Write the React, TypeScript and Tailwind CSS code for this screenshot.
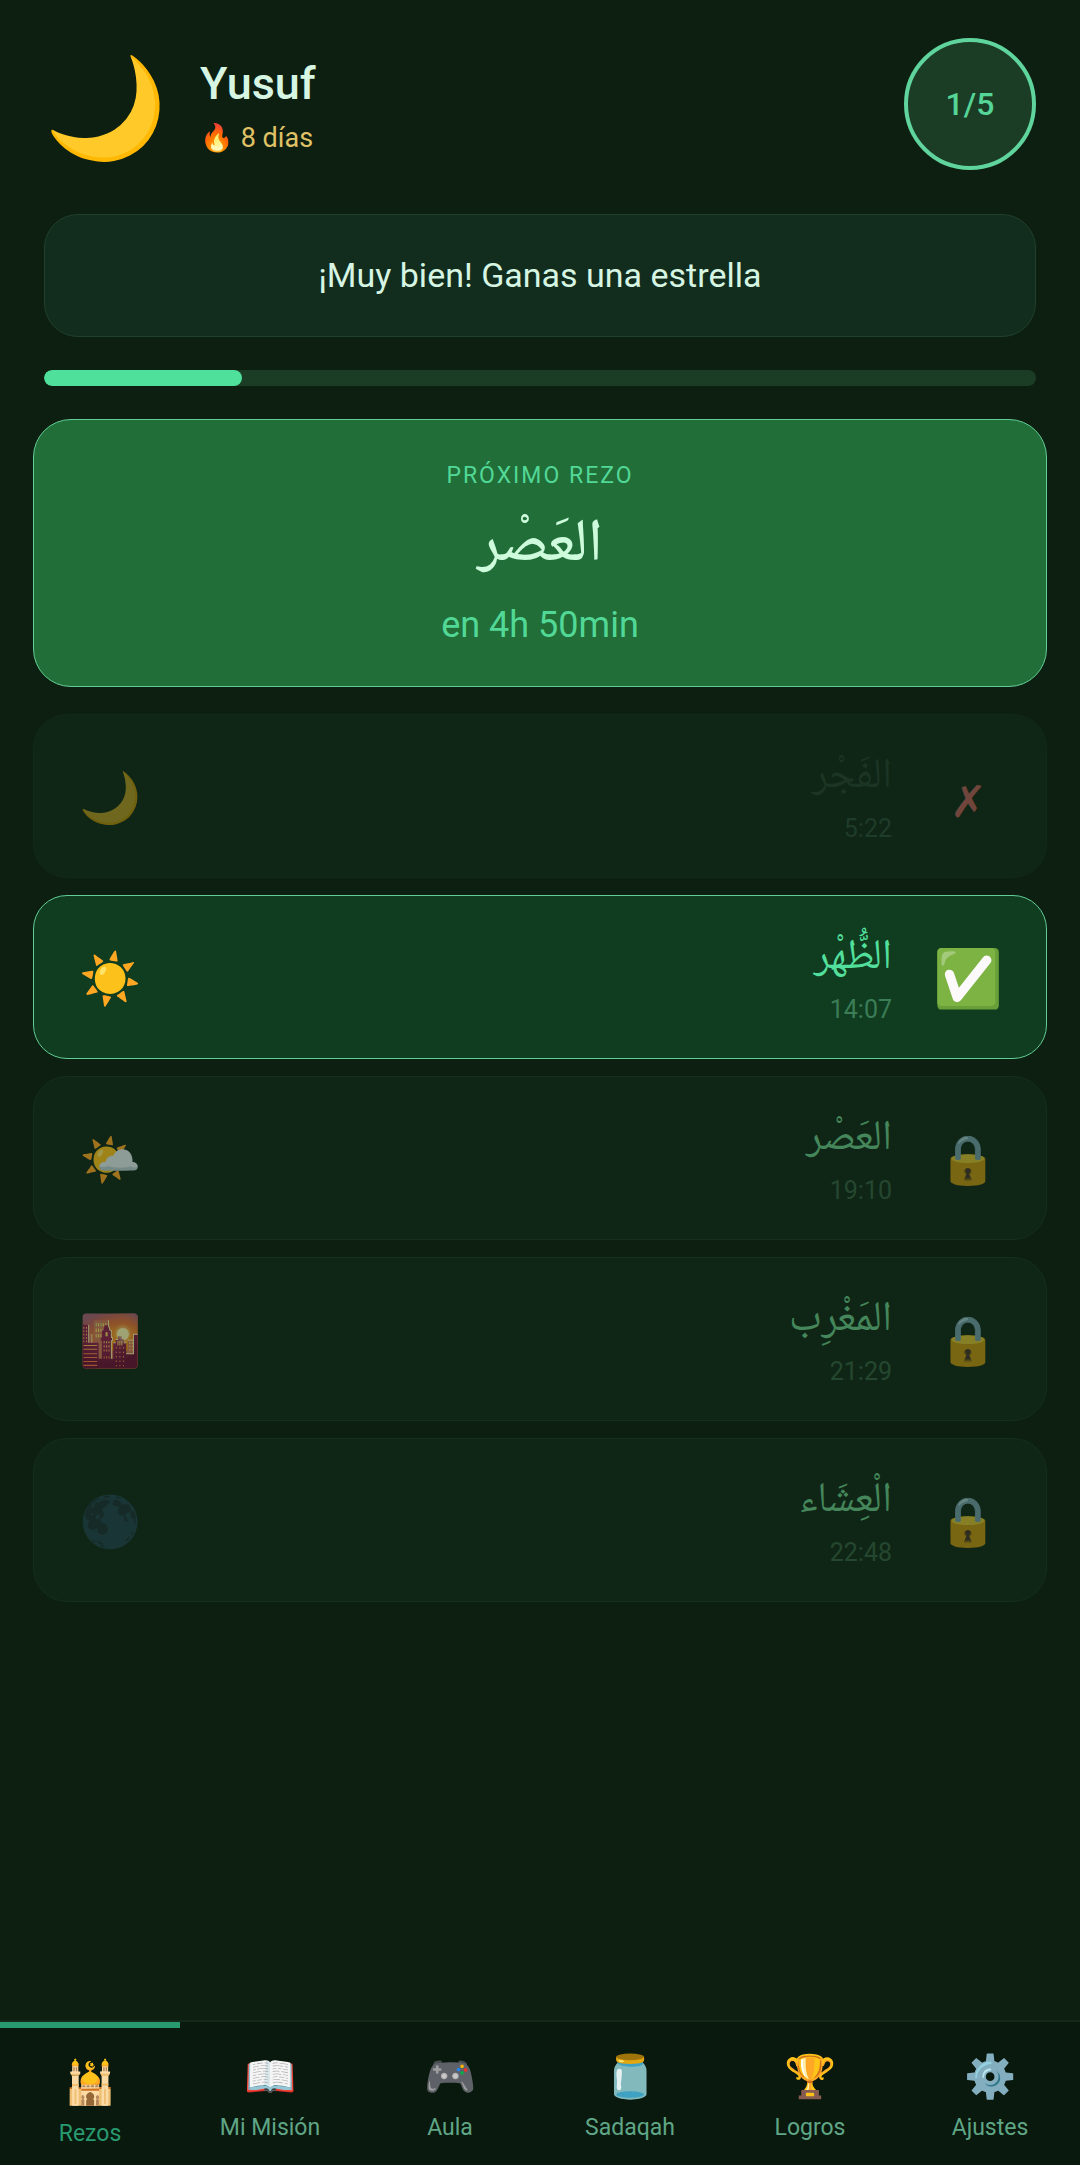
import clsx from "clsx";

type PrayerState = "missed" | "done" | "locked";

type Prayer = { name: string; time: string; icon: string; state: PrayerState };

const prayers: Prayer[] = [
  { name: "الفَجْر", time: "5:22", icon: "🌙", state: "missed" },
  { name: "الظُّهْر", time: "14:07", icon: "☀️", state: "done" },
  { name: "العَصْر", time: "19:10", icon: "🌤️", state: "locked" },
  { name: "المَغْرِب", time: "21:29", icon: "🌇", state: "locked" },
  { name: "الْعِشَاء", time: "22:48", icon: "🌑", state: "locked" },
];

const tabs = [
  { label: "Rezos", icon: "🕌", active: true },
  { label: "Mi Misión", icon: "📖" },
  { label: "Aula", icon: "🎮" },
  { label: "Sadaqah", icon: "🫙" },
  { label: "Logros", icon: "🏆" },
  { label: "Ajustes", icon: "⚙️" },
];

const rowStyle: Record<PrayerState, string> = {
  missed: "border-[#122819] bg-[#0f2516]",
  done: "border-[#62cd96] bg-[#103c20]",
  locked: "border-[#152e1e] bg-[#0f2616]",
};

const nameStyle: Record<PrayerState, string> = {
  missed: "text-[#1c3424]",
  done: "text-[#52de9b]",
  locked: "text-[#45865b]",
};

const timeStyle: Record<PrayerState, string> = {
  missed: "text-[#1f3b2a]",
  done: "text-[#3a7d56]",
  locked: "text-[#25472f]",
};

const iconStyle: Record<PrayerState, string> = {
  missed: "opacity-40",
  done: "",
  locked: "opacity-60",
};

function Status({ state }: { state: PrayerState }) {
  if (state === "done") return <span className="text-[56px]">✅</span>;
  if (state === "missed") return <span className="pt-2 text-[44px] text-[#70453c]">✗</span>;
  return <span className="text-[48px] opacity-50">🔒</span>;
}

function PrayerRow({ prayer }: { prayer: Prayer }) {
  const { name, time, icon, state } = prayer;
  return (
    <li>
      <button
        className={clsx(
          "flex h-41 w-full items-center rounded-[34px] border pr-[34px] pl-8 leading-none",
          rowStyle[state],
        )}
      >
        <span className={clsx("w-22 pt-1 text-center text-[50px]", iconStyle[state])}>{icon}</span>
        <span className="flex flex-1 flex-col items-end pr-8">
          <span
            dir="rtl"
            className={clsx("font-['Noto_Naskh_Arabic',serif] text-[42px] leading-[66px]", nameStyle[state])}
          >
            {name}
          </span>
          <span className={clsx("text-[25px] leading-[36px]", timeStyle[state])}>{time}</span>
        </span>
        <span className="flex w-22 justify-center pt-1">
          <Status state={state} />
        </span>
      </button>
    </li>
  );
}

export default function App() {
  const done = prayers.filter((p) => p.state === "done").length;
  return (
    <div className="flex min-h-screen flex-col bg-[#0d1f11] font-['Roboto',sans-serif] text-[#d6f5e3]">
      <header className="flex items-center px-11 pt-[38px]">
        <span className="pt-2 text-[99px] leading-none">🌙</span>
        <div className="ml-[33px] flex-1 pt-2">
          <h1 className="text-[45px] leading-[60px] font-medium">Yusuf</h1>
          <p className="text-[27px] leading-[48px] text-[#e0c266]">🔥 8 días</p>
        </div>
        <div className="flex size-33 items-center justify-center rounded-full border-4 border-[#5fd49c] bg-[#1b3c25] text-[32px] font-medium text-[#55d597]">
          {done}/{prayers.length}
        </div>
      </header>

      <p className="mx-11 mt-11 rounded-[34px] border border-[#20402e] bg-[#122d1d] pt-9 pb-[37px] text-center text-[34px] leading-[48px]">
        ¡Muy bien! Ganas una estrella
      </p>

      <div className="mx-11 mt-[33px] h-4 overflow-hidden rounded-lg bg-[#1b3c25]">
        <div className="h-full rounded-lg bg-[#4fe09b]" style={{ width: `${(done / prayers.length) * 100}%` }} />
      </div>

      <main className="flex-1 px-[33px]">
        <section className="mt-[33px] rounded-[38px] border border-[#62cd96] bg-[#216e39] pt-[34px] pb-8 text-center text-[#52d896]">
          <h2 className="text-[23px] leading-[44px] tracking-[2px] uppercase">Próximo rezo</h2>
          <p
            dir="rtl"
            className="font-['Noto_Naskh_Arabic',serif] text-[60px] leading-[98px] font-medium text-[#cdfbdc]"
          >
            العَصْر
          </p>
          <p className="text-[36px] leading-[58px]">en 4h 50min</p>
        </section>

        <ul className="mt-[27px] space-y-[17px]">
          {prayers.map((p) => (
            <PrayerRow key={p.time} prayer={p} />
          ))}
        </ul>
      </main>

      <nav className="flex border-t-2 border-[#15291a] bg-[#0a190d]">
        {tabs.map((tab) => (
          <button
            key={tab.label}
            className={clsx(
              "flex h-[143px] flex-1 flex-col items-center pt-6 text-[23px]",
              tab.active ? "border-t-6 border-[#279a70] text-[#279a70]" : "text-[#5fa687]",
            )}
          >
            <span className="text-[42px] leading-[62px]">{tab.icon}</span>
            <span className="leading-[40px]">{tab.label}</span>
          </button>
        ))}
      </nav>
    </div>
  );
}
